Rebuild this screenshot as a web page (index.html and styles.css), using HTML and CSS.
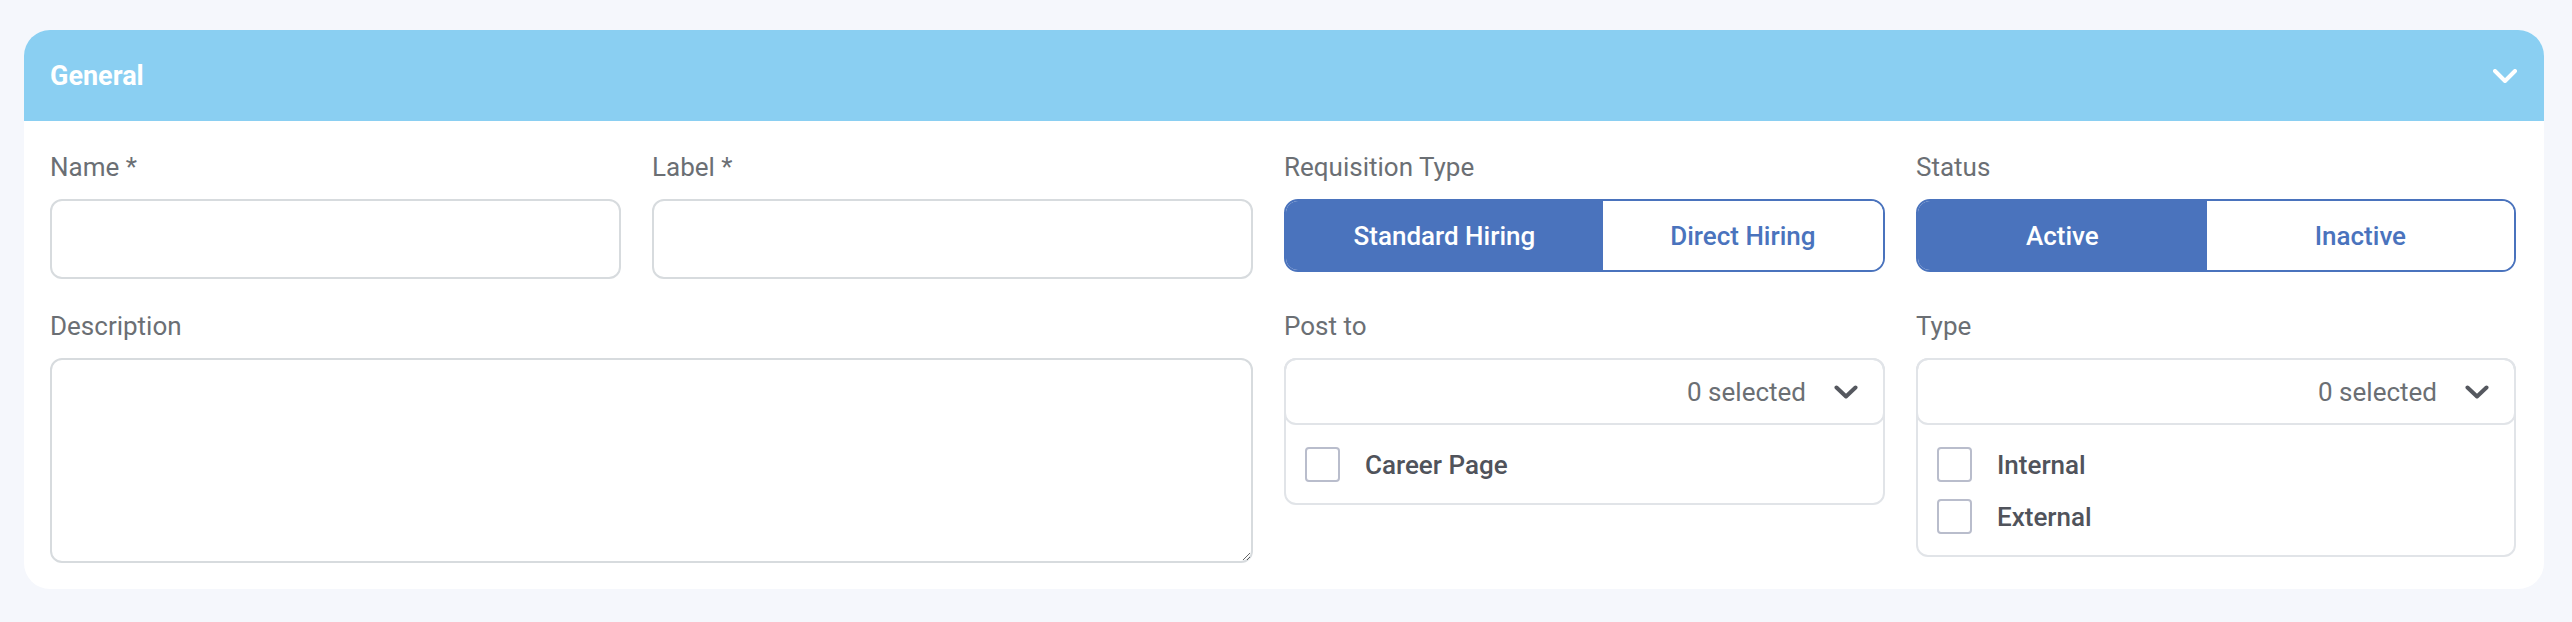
FILE: index.html
```html
<!DOCTYPE html>
<html lang="en">
<head>
<meta charset="utf-8">
<title>General</title>
<link rel="stylesheet" href="styles.css">
</head>
<body>
<div class="page">
  <section class="card">
    <header class="card-head">
      <h2 class="card-title">General</h2>
      <svg class="head-chevron" width="24" height="14" viewBox="0 0 24 14" aria-hidden="true">
        <path d="M2 2 L12 12 L22 2" fill="none" stroke="#ffffff" stroke-width="4" stroke-linecap="round" stroke-linejoin="round"/>
      </svg>
    </header>
    <div class="card-body">
      <div class="field">
        <label class="field-label">Name *</label>
        <input class="text-input" type="text">
      </div>
      <div class="field">
        <label class="field-label">Label *</label>
        <input class="text-input" type="text">
      </div>
      <div class="field">
        <label class="field-label">Requisition Type</label>
        <div class="toggle">
          <button class="toggle-btn is-active" type="button">Standard Hiring</button>
          <button class="toggle-btn" type="button">Direct Hiring</button>
        </div>
      </div>
      <div class="field">
        <label class="field-label">Status</label>
        <div class="toggle">
          <button class="toggle-btn is-active" type="button">Active</button>
          <button class="toggle-btn" type="button">Inactive</button>
        </div>
      </div>
      <div class="field field-wide">
        <label class="field-label">Description</label>
        <textarea class="text-area"></textarea>
      </div>
      <div class="field">
        <label class="field-label">Post to</label>
        <div class="multi">
          <div class="multi-head">
            <span class="multi-count">0 selected</span>
            <svg class="multi-chevron" width="24" height="14" viewBox="0 0 24 14" aria-hidden="true">
              <path d="M2.5 2.5 L12 11.5 L21.5 2.5" fill="none" stroke="#55585f" stroke-width="4" stroke-linecap="round" stroke-linejoin="round"/>
            </svg>
          </div>
          <div class="multi-list">
            <label class="option"><input class="check" type="checkbox"><span>Career Page</span></label>
          </div>
        </div>
      </div>
      <div class="field">
        <label class="field-label">Type</label>
        <div class="multi">
          <div class="multi-head">
            <span class="multi-count">0 selected</span>
            <svg class="multi-chevron" width="24" height="14" viewBox="0 0 24 14" aria-hidden="true">
              <path d="M2.5 2.5 L12 11.5 L21.5 2.5" fill="none" stroke="#55585f" stroke-width="4" stroke-linecap="round" stroke-linejoin="round"/>
            </svg>
          </div>
          <div class="multi-list">
            <label class="option"><input class="check" type="checkbox"><span>Internal</span></label>
            <label class="option"><input class="check" type="checkbox"><span>External</span></label>
          </div>
        </div>
      </div>
    </div>
  </section>
</div>
</body>
</html>
```

FILE: styles.css
```css
* {
  box-sizing: border-box;
}

html, body {
  margin: 0;
  padding: 0;
  background: #f5f7fc;
  font-family: Roboto, "Liberation Sans", Arial, sans-serif;
}

.page {
  padding: 30px 28px 0 24px;
}

.card {
  background: #ffffff;
  border-radius: 26px;
  overflow: hidden;
}

.card-head {
  height: 91px;
  background: #8acff2;
  display: flex;
  align-items: center;
  justify-content: space-between;
  padding: 0 27px 0 26px;
}

.card-title {
  margin: 0;
  font-size: 27px;
  font-weight: 700;
  color: #ffffff;
  line-height: 30px;
}

.head-chevron {
  display: block;
}

.card-body {
  display: grid;
  grid-template-columns: 571px 601px 601px 600px;
  column-gap: 31px;
  row-gap: 32px;
  align-items: start;
  padding: 31px 28px 26px 26px;
}

.field {
  display: flex;
  flex-direction: column;
}

.field-wide {
  grid-column: 1 / span 2;
}

.field-label {
  display: block;
  font-size: 26px;
  line-height: 30px;
  color: #6b6f74;
  margin-bottom: 17px;
}

.text-input {
  display: block;
  width: 100%;
  height: 80px;
  border: 2px solid #d7dbde;
  border-radius: 12px;
  background: #ffffff;
  font: inherit;
  outline: none;
}

.text-area {
  display: block;
  width: 100%;
  height: 205px;
  border: 2px solid #d7dbde;
  border-radius: 12px;
  background: #ffffff;
  font: inherit;
  outline: none;
  margin: 0;
}

.toggle {
  display: flex;
  height: 73px;
  border: 2px solid #4a73bd;
  border-radius: 14px;
  overflow: hidden;
  background: #ffffff;
}

.toggle-btn {
  flex: 1 1 auto;
  border: 0;
  margin: 0;
  padding: 0 20px;
  background: #ffffff;
  color: #4a73bd;
  font-family: Roboto, "Liberation Sans", Arial, sans-serif;
  font-size: 26px;
  font-weight: 500;
  cursor: pointer;
}

.toggle-btn.is-active {
  background: #4a73bd;
  color: #ffffff;
}

.multi {
  border: 2px solid #e1e4e8;
  border-radius: 12px;
  background: #ffffff;
}

.multi-head {
  height: 67px;
  margin: -2px -2px 0 -2px;
  border: 2px solid #e1e4e8;
  border-radius: 12px;
  display: flex;
  align-items: center;
  justify-content: flex-end;
  gap: 28px;
  padding-right: 25px;
}

.multi-count {
  font-size: 26px;
  color: #6b6f74;
  line-height: 30px;
}

.multi-chevron {
  display: block;
}

.multi-list {
  display: flex;
  flex-direction: column;
  gap: 17px;
  padding: 22px 19px 21px 19px;
}

.option {
  display: flex;
  align-items: center;
  gap: 25px;
  height: 35px;
  font-size: 26px;
  font-weight: 500;
  color: #50535b;
}

.check {
  appearance: none;
  -webkit-appearance: none;
  width: 35px;
  height: 35px;
  margin: 0;
  border: 2px solid #b9bdcc;
  border-radius: 4px;
  background: #ffffff;
  flex: none;
}
```
